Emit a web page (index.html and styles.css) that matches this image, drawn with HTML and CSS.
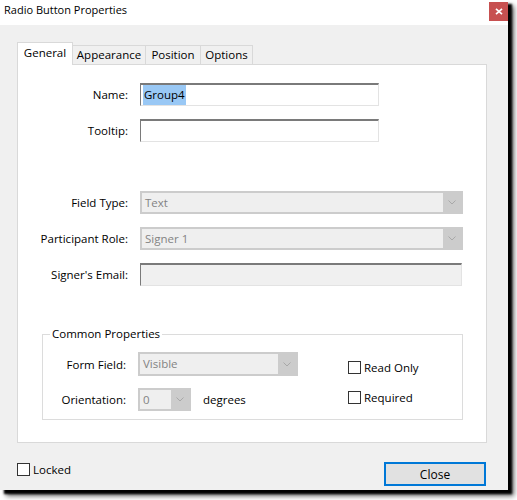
FILE: index.html
```html
<!DOCTYPE html>
<html lang="en">
<head>
<meta charset="utf-8">
<title>Radio Button Properties</title>
<link rel="stylesheet" href="styles.css">
</head>
<body>
<div class="window">
  <div class="titlebar">
    <span class="title">Radio Button Properties</span>
    <button class="x-btn" aria-label="Close window">
      <svg width="8" height="7" viewBox="0 0 8 7"><path d="M1 0.8 L7 6.2 M7 0.8 L1 6.2" stroke="#fff" stroke-width="1.7" fill="none"/></svg>
    </button>
  </div>
  <div class="body">
    <div class="tabs">
      <div class="tab active w-general">General</div>
      <div class="tab w-appearance">Appearance</div>
      <div class="tab w-position">Position</div>
      <div class="tab w-options">Options</div>
    </div>
    <div class="panel">
      <div class="form">
        <label class="lbl">Name:</label>
        <div class="input w-name"><span class="hl">Group4</span></div>
        <label class="lbl">Tooltip:</label>
        <div class="input w-name"></div>
      </div>
      <div class="form second">
        <label class="lbl">Field Type:</label>
        <div class="select w-wide"><span class="val">Text</span><span class="arrow"><svg width="8" height="5" viewBox="0 0 8 5"><path d="M0.5 0.5 L4 4 L7.5 0.5" stroke="#a8a8a8" stroke-width="1" fill="none"/></svg></span></div>
        <label class="lbl">Participant Role:</label>
        <div class="select w-wide"><span class="val">Signer 1</span><span class="arrow"><svg width="8" height="5" viewBox="0 0 8 5"><path d="M0.5 0.5 L4 4 L7.5 0.5" stroke="#a8a8a8" stroke-width="1" fill="none"/></svg></span></div>
        <label class="lbl">Signer's Email:</label>
        <div class="input disabled w-email"></div>
      </div>
      <fieldset class="group">
        <legend>Common Properties</legend>
        <div class="group-body">
          <div class="group-form">
            <label class="lbl">Form Field:</label>
            <div class="select h24 w-form"><span class="val">Visible</span><span class="arrow"><svg width="8" height="5" viewBox="0 0 8 5"><path d="M0.5 0.5 L4 4 L7.5 0.5" stroke="#a8a8a8" stroke-width="1" fill="none"/></svg></span></div>
            <label class="lbl">Orientation:</label>
            <div class="orient">
              <div class="select w-orient"><span class="val">0</span><span class="arrow"><svg width="8" height="5" viewBox="0 0 8 5"><path d="M0.5 0.5 L4 4 L7.5 0.5" stroke="#a8a8a8" stroke-width="1" fill="none"/></svg></span></div>
              <span class="unit">degrees</span>
            </div>
          </div>
          <div class="checks">
            <label class="check"><span class="box"></span>Read Only</label>
            <label class="check"><span class="box"></span>Required</label>
          </div>
        </div>
      </fieldset>
    </div>
    <div class="footer">
      <label class="check"><span class="box"></span>Locked</label>
      <button class="btn">Close</button>
    </div>
  </div>
</div>
</body>
</html>
```

FILE: styles.css
```css
html, body {
  margin: 0;
  padding: 0;
  background: #fff;
}
body {
  min-height: 500px;
  font-family: "Segoe UI", "Open Sans", "Noto Sans", sans-serif;
  font-size: 11.5px;
  color: #000;
}
.window {
  width: 508px;
  height: 490px;
  background: #f0f0f0;
  box-shadow: 4px 4px 2px #000, 6px 6px 5px rgba(0, 0, 0, 0.6);
  display: flex;
  flex-direction: column;
}
.titlebar {
  height: 25px;
  flex: none;
  background: #fff;
  display: flex;
  align-items: flex-start;
  justify-content: space-between;
}
.title {
  padding-left: 4px;
  line-height: 20px;
  font-size: 11px;
}
.x-btn {
  width: 19px;
  height: 19px;
  margin-top: 2px;
  padding: 0;
  border: 0;
  background: #c75050;
  display: flex;
  align-items: center;
  justify-content: center;
}
.body {
  padding: 17px 0 0 17px;
  display: flex;
  flex-direction: column;
}
.tabs {
  display: flex;
  align-items: flex-start;
  height: 22px;
  position: relative;
  z-index: 1;
}
.tab {
  box-sizing: border-box;
  height: 19px;
  margin-top: 3px;
  margin-left: -1px;
  border: 1px solid #d9d9d9;
  border-bottom: 0;
  background: #f0f0f0;
  line-height: 18px;
  text-align: center;
}
.tab.active {
  height: 23px;
  margin-top: 0;
  margin-left: 0;
  background: #fff;
  line-height: 19px;
}
.w-general { width: 56px; }
.w-appearance { width: 74px; }
.w-position { width: 56px; }
.w-options { width: 53px; }
.panel {
  box-sizing: border-box;
  width: 470px;
  height: 379px;
  background: #fff;
  border: 1px solid #d9d9d9;
  padding-top: 18px;
  display: flex;
  flex-direction: column;
}
.form {
  display: grid;
  grid-template-columns: 110px auto;
  column-gap: 12px;
  row-gap: 13px;
  justify-content: start;
}
.form.second {
  margin-top: 49px;
}
.lbl {
  text-align: right;
  align-self: center;
  white-space: nowrap;
}
.input {
  box-sizing: border-box;
  height: 23px;
  background: #fff;
  border: 1px solid #e3e3e3;
  border-top: 2px solid #7a7a7a;
  border-left: 1px solid #7a7a7a;
  padding: 0 0 0 2px;
  display: flex;
  align-items: stretch;
}
.input.disabled {
  background: #f0f0f0;
}
.hl {
  background: #99c8f5;
  padding: 0 1px;
  line-height: 20px;
  font-size: 11.5px;
}
.w-name { width: 239px; }
.w-email { width: 322px; }
.w-wide { width: 323px; }
.w-form { width: 160px; }
.w-orient { width: 53px; }
.select {
  box-sizing: border-box;
  height: 23px;
  border: 2px solid #cccccc;
  background: #efefef;
  display: flex;
}
.select.h24 { height: 24px; }
.select .val {
  flex: 1;
  padding-left: 3px;
  color: #838383;
  line-height: 19px;
  font-size: 11.5px;
}
.select .arrow {
  width: 18px;
  background: #cccccc;
  display: flex;
  align-items: center;
  justify-content: center;
}
.group {
  box-sizing: border-box;
  margin: 40px 0 0 24px;
  padding: 0 0 8px 0;
  width: 421px;
  border: 1px solid #dcdcdc;
}
.group legend {
  margin-left: 7px;
  padding: 0 2px;
  line-height: 16px;
  font-size: 11.5px;
}
.group-body {
  display: flex;
  align-items: flex-start;
  padding-top: 10px;
}
.group-form {
  display: grid;
  grid-template-columns: 83px auto;
  column-gap: 12px;
  row-gap: 12px;
}
.orient {
  display: flex;
  align-items: center;
  gap: 12px;
}
.checks {
  display: flex;
  flex-direction: column;
  gap: 17px;
  margin: 9px 0 0 50px;
}
.check {
  display: flex;
  align-items: center;
  gap: 3px;
  height: 13px;
  font-size: 11.5px;
}
.box {
  box-sizing: border-box;
  width: 13px;
  height: 13px;
  border: 1px solid #333;
  background: #fff;
}
.footer {
  width: 470px;
  margin-top: 19px;
  display: flex;
  justify-content: space-between;
  align-items: flex-start;
}
.footer .check {
  margin-top: 1px;
}
.btn {
  box-sizing: border-box;
  width: 102px;
  height: 24px;
  margin-right: 1px;
  border: 2px solid #0078d7;
  background: #e1e1e1;
  font-family: inherit;
  font-size: 12px;
  color: #000;
  padding: 0;
}
```
